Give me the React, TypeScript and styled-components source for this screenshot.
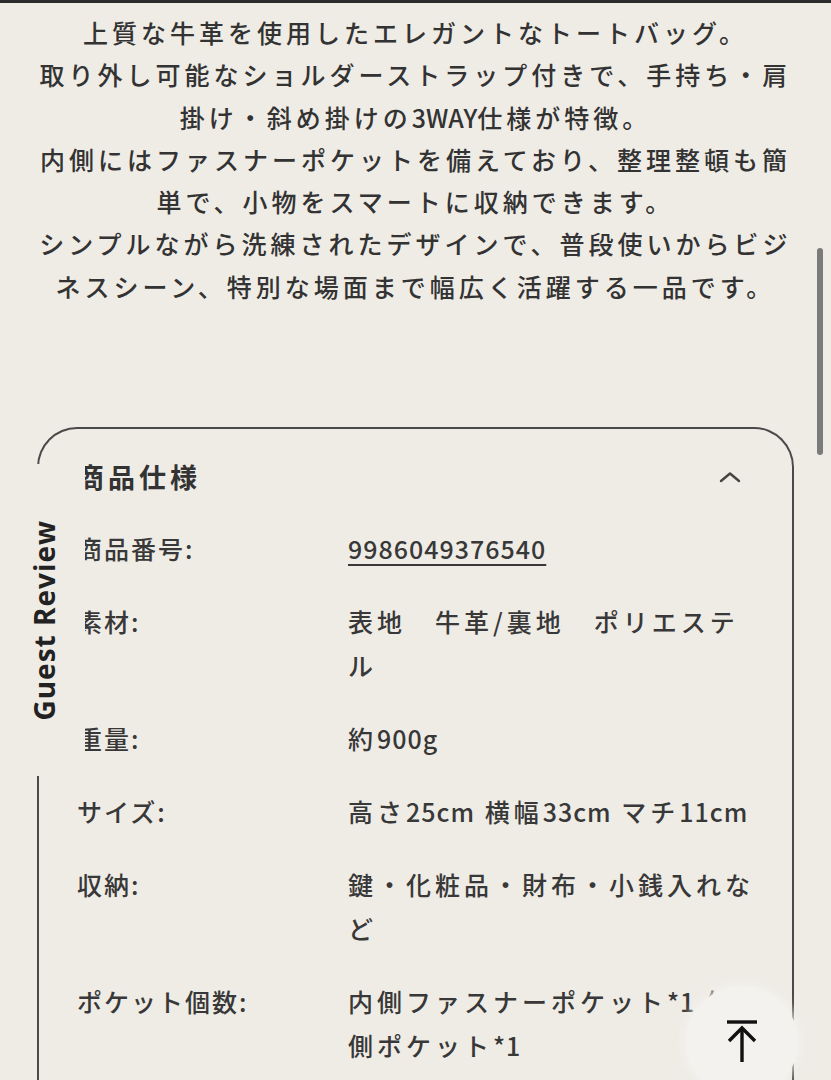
import React from "react";
import styled, { createGlobalStyle } from "styled-components";

const GlobalStyle = createGlobalStyle`
  html, body {
    margin: 0;
    padding: 0;
    overflow: hidden;
    background: #efece6;
  }
  body {
    font-family: "Noto Sans CJK JP", "Noto Sans", sans-serif;
    color: #333;
  }
`;

const Page = styled.div`
  min-height: 100vh;
  border-top: 3px solid #2b2b2b;
`;

const Description = styled.div`
  padding: 8px 38px 0;
  font-size: 25px;
  font-weight: 500;
  line-height: 42.3px;
  letter-spacing: 4px;
  text-align: center;
  color: #333;
`;

const Sentence = styled.p`
  margin: 0;
`;

const Latin = styled.span<{ $tight?: boolean }>`
  letter-spacing: ${(p) => (p.$tight ? "0px" : "1px")};
`;

const Card = styled.section`
  margin: 120px 37px 0;
  border: 2px solid #4a4a4a;
  border-bottom: none;
  border-radius: 40px 40px 0 0;
  padding: 26px 50px 40px 38px;
  min-height: 800px;
`;

const CardHeader = styled.div`
  display: flex;
  align-items: center;
  justify-content: space-between;
  height: 44px;
`;

const CardTitle = styled.h2`
  margin: 0;
  font-size: 27px;
  font-weight: 700;
  letter-spacing: 4px;
  line-height: 44px;
  color: #333;
`;

const SpecList = styled.dl`
  margin: 27px 0 0;
  display: grid;
  grid-template-columns: 271px 410px;
  row-gap: 29px;
  font-size: 25px;
  font-weight: 500;
  line-height: 44px;
  letter-spacing: 4px;
  color: #383838;
`;

const SpecLabel = styled.dt`
  margin: 0;
  letter-spacing: 2px;
`;

const SpecValue = styled.dd`
  margin: 0;
`;

const ProductLink = styled.a`
  color: #383838;
  letter-spacing: 1px;
  text-decoration: underline;
  text-decoration-thickness: 2px;
  text-underline-offset: 5px;
`;

const SideTab = styled.div`
  position: fixed;
  left: 0;
  top: 464px;
  width: 85px;
  height: 312px;
  background: #efece6;
  display: flex;
  align-items: center;
  justify-content: center;
  padding-left: 3px;
  box-sizing: border-box;
`;

const SideTabText = styled.span`
  writing-mode: vertical-rl;
  transform: rotate(180deg);
  font-family: "Open Sans", "Noto Sans", sans-serif;
  font-weight: 700;
  font-size: 28px;
  letter-spacing: 1px;
  color: #222;
`;

const BackToTop = styled.button`
  position: fixed;
  left: 686px;
  top: 986px;
  width: 112px;
  height: 112px;
  border: none;
  border-radius: 50%;
  background: #f3f2ee;
  box-shadow: 0 0 8px 3px rgba(243, 242, 238, 0.85);
  display: flex;
  align-items: flex-start;
  justify-content: center;
  padding: 34px 0 0;
  cursor: pointer;
`;

const ScrollThumb = styled.div`
  position: fixed;
  left: 817px;
  top: 248px;
  width: 6px;
  height: 207px;
  border-radius: 3px;
  background: #7b7b7b;
`;

const ChevronUp = () => (
  <svg width="24" height="12" viewBox="0 0 24 12" fill="none">
    <path d="M3 10 L12 2.5 L21 10" stroke="#444" strokeWidth="2.4" strokeLinecap="round" strokeLinejoin="round" />
  </svg>
);

const ArrowToTop = () => (
  <svg width="34" height="44" viewBox="0 0 34 44" fill="none">
    <path d="M2 2 H32" stroke="#111" strokeWidth="3.4" />
    <path d="M17 8 V42" stroke="#111" strokeWidth="3.4" />
    <path d="M4 21 L17 8 L30 21" stroke="#111" strokeWidth="3.4" strokeLinejoin="miter" />
  </svg>
);

export default function App() {
  return (
    <>
      <GlobalStyle />
      <Page>
        <Description>
          <Sentence>上質な牛革を使用したエレガントなトートバッグ。</Sentence>
          <Sentence>
            取り外し可能なショルダーストラップ付きで、手持ち・肩掛け・斜め掛けの<Latin $tight>3WAY</Latin>仕様が特徴。
          </Sentence>
          <Sentence>内側にはファスナーポケットを備えており、整理整頓も簡単で、小物をスマートに収納できます。</Sentence>
          <Sentence>シンプルながら洗練されたデザインで、普段使いからビジネスシーン、特別な場面まで幅広く活躍する一品です。</Sentence>
        </Description>

        <Card>
          <CardHeader>
            <CardTitle>商品仕様</CardTitle>
            <ChevronUp />
          </CardHeader>
          <SpecList>
            <SpecLabel>商品番号:</SpecLabel>
            <SpecValue>
              <ProductLink href="#">9986049376540</ProductLink>
            </SpecValue>

            <SpecLabel>素材:</SpecLabel>
            <SpecValue>表地　牛革/裏地　ポリエステル</SpecValue>

            <SpecLabel>重量:</SpecLabel>
            <SpecValue>
              約<Latin>900g</Latin>
            </SpecValue>

            <SpecLabel>サイズ:</SpecLabel>
            <SpecValue>
              高さ<Latin>25cm</Latin> 横幅<Latin>33cm</Latin> マチ<Latin>11cm</Latin>
            </SpecValue>

            <SpecLabel>収納:</SpecLabel>
            <SpecValue>鍵・化粧品・財布・小銭入れなど</SpecValue>

            <SpecLabel>ポケット個数:</SpecLabel>
            <SpecValue>
              内側ファスナーポケット<Latin>*1</Latin> 外側ポケット<Latin>*1</Latin>
            </SpecValue>
          </SpecList>
        </Card>
      </Page>

      <SideTab>
        <SideTabText>Guest Review</SideTabText>
      </SideTab>
      <ScrollThumb />
      <BackToTop aria-label="ページトップへ">
        <ArrowToTop />
      </BackToTop>
    </>
  );
}
